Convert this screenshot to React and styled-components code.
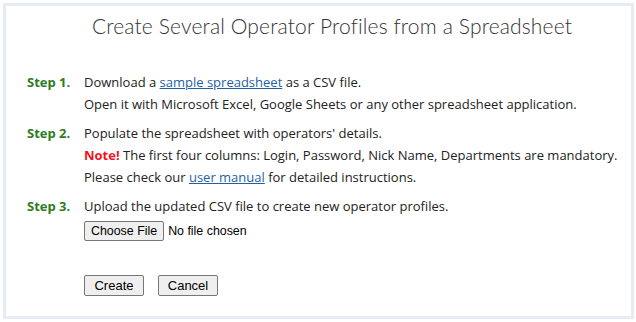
import React from "react";
import styled, { createGlobalStyle } from "styled-components";

const GlobalStyle = createGlobalStyle`
  html, body {
    margin: 0;
    padding: 0;
    background: #fff;
  }
  body {
    font-family: "Open Sans", "Liberation Sans", sans-serif;
  }
`;

const Page = styled.div`
  padding: 3px 2px 3px 3px;
  width: 636px;
  height: 322px;
  box-sizing: border-box;
`;

const Panel = styled.div`
  box-sizing: border-box;
  height: 316px;
  border: 3px solid #e6ebf6;
  background: #fff;
  padding: 0 0 0 21px;
`;

const Title = styled.h1`
  margin: 0;
  padding: 7px 0 0 65px;
  height: 39px;
  box-sizing: border-box;
  font-family: "Lato", "Open Sans", sans-serif;
  font-weight: 300;
  font-size: 21px;
  color: #333;
  letter-spacing: 0.15px;
`;

const StepList = styled.div`
  display: flex;
  flex-direction: column;
  gap: 7px;
  margin-top: 26px;
`;

const Step = styled.div`
  display: flex;
  font-size: 13px;
  line-height: 22px;
  color: #222;
`;

const StepLabel = styled.div`
  width: 57px;
  flex: none;
  font-weight: 700;
  color: #2e7d22;
`;

const StepBody = styled.div`
  display: flex;
  flex-direction: column;
  align-items: flex-start;
`;

const Line = styled.div`
  white-space: nowrap;
`;

const Link = styled.a`
  color: #1f5fa6;
  text-decoration: underline;
`;

const Note = styled.span`
  color: #f0141e;
  font-weight: 700;
`;

const FileInput = styled.input`
  margin: 4px 0 0;
  font-family: "Liberation Sans", Arial, sans-serif;
  font-size: 12.4px;
  color: #000;

  &::file-selector-button {
    height: 20px;
    padding: 1px 6px;
    margin-right: 4px;
    font: inherit;
    background: #efefef;
    border: 1px solid #767676;
    border-radius: 2px;
  }
`;

const Actions = styled.div`
  display: flex;
  gap: 14px;
  margin: 34px 0 0 57px;
`;

const Button = styled.button`
  width: 60px;
  height: 21px;
  padding: 1px 6px;
  font-family: "Liberation Sans", Arial, sans-serif;
  font-size: 13px;
  color: #000;
  background: #efefef;
  border: 1px solid #767676;
  border-radius: 2px;
`;

const steps = [
  {
    label: "Step 1.",
    lines: [
      <>Download a <Link href="#">sample spreadsheet</Link> as a CSV file.</>,
      <>Open it with Microsoft Excel, Google Sheets or any other spreadsheet application.</>
    ]
  },
  {
    label: "Step 2.",
    lines: [
      <>Populate the spreadsheet with operators' details.</>,
      <><Note>Note!</Note> The first four columns: Login, Password, Nick Name, Departments are mandatory.</>,
      <>Please check our <Link href="#">user manual</Link> for detailed instructions.</>
    ]
  },
  {
    label: "Step 3.",
    lines: [<>Upload the updated CSV file to create new operator profiles.</>],
    upload: true
  }
];

export default function App() {
  return (
    <Page>
      <GlobalStyle />
      <Panel>
        <Title>Create Several Operator Profiles from a Spreadsheet</Title>
        <StepList>
          {steps.map((step) => (
            <Step key={step.label}>
              <StepLabel>{step.label}</StepLabel>
              <StepBody>
                {step.lines.map((line, i) => (
                  <Line key={i}>{line}</Line>
                ))}
                {step.upload && <FileInput type="file" accept=".csv" />}
              </StepBody>
            </Step>
          ))}
        </StepList>
        <Actions>
          <Button type="button">Create</Button>
          <Button type="button">Cancel</Button>
        </Actions>
      </Panel>
    </Page>
  );
}
